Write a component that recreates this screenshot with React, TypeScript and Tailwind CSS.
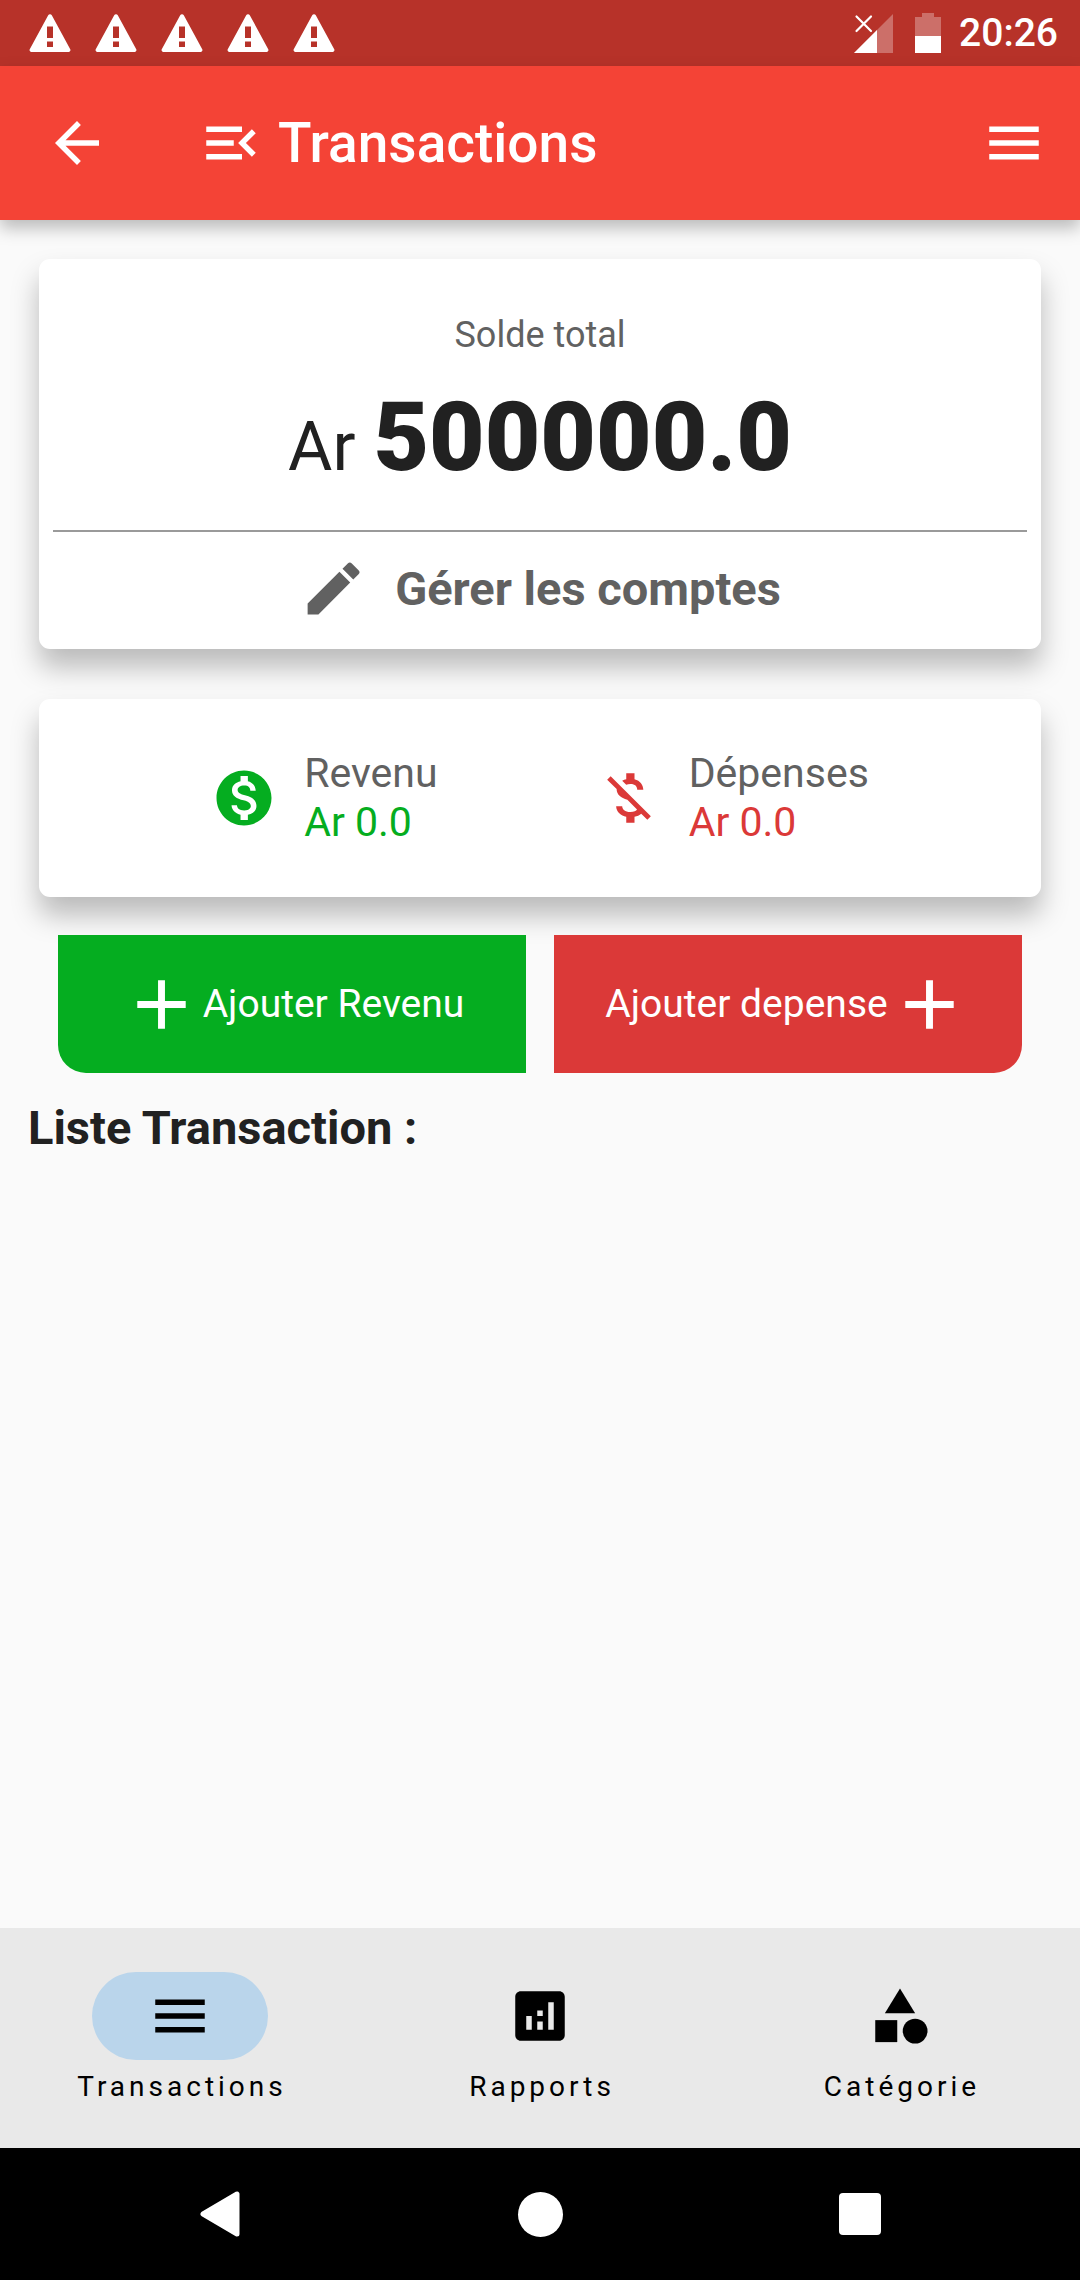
import React from "react";
import {
  MdAdd,
  MdAnalytics,
  MdArrowBack,
  MdCategory,
  MdEdit,
  MdMenu,
  MdMenuOpen,
  MdMoneyOff,
  MdMonetizationOn,
} from "react-icons/md";

function WarningIcon() {
  return (
    <svg viewBox="0 0 42 38" className="h-[38px] w-[42px]" fill="#fff" aria-hidden="true">
      <path
        fillRule="evenodd"
        d="M19.2 1.2a2.1 2.1 0 0 1 3.6 0L41.1 34.9A2 2 0 0 1 39.4 38H2.6A2 2 0 0 1 .9 34.9ZM18 12.5V24h6V12.5ZM18 27.5v5.500h6v-5.500Z"
      />
    </svg>
  );
}

function StatusBar() {
  return (
    <div className="flex h-[66px] items-center justify-between bg-[#b73229] pl-[29px] pr-[22px] text-white">
      <div className="flex gap-6">
        {[0, 1, 2, 3, 4].map((n) => (
          <WarningIcon key={n} />
        ))}
      </div>
      <div className="flex items-center">
        <svg viewBox="0 0 40 40" className="h-10 w-10" aria-hidden="true">
          <path d="M40 1V40H1Z" fill="#fff" fillOpacity="0.3" />
          <path d="M24 17V40H1Z" fill="#fff" />
          <path d="M3.500 3.500 18 18M18 3.500 3.500 18" stroke="#fff" strokeWidth="2.200" strokeLinecap="round" />
        </svg>
        <svg viewBox="0 0 26 40" className="ml-[22px] h-10 w-[26px]" aria-hidden="true">
          <path d="M7 0H19V4H26V23H0V4H7Z" fill="#fff" fillOpacity="0.3" />
          <path d="M0 23H26V40H0Z" fill="#fff" />
        </svg>
        <span className="ml-[18px] text-[39px] leading-[44px] font-medium">20:26</span>
      </div>
    </div>
  );
}

function AppBar() {
  return (
    <header className="relative flex h-[154px] items-center bg-[#f44336] pr-[33px] pl-11 text-white shadow-[0_8px_16px_rgba(0,0,0,0.26)]">
      <button type="button" aria-label="Retour">
        <MdArrowBack className="size-[66px]" />
      </button>
      <MdMenuOpen className="ml-[88px] size-[66px]" />
      <h1 className="ml-[14px] text-[55px] leading-[66px] font-medium">Transactions</h1>
      <button type="button" aria-label="Menu" className="ml-auto">
        <MdMenu className="size-[66px]" />
      </button>
    </header>
  );
}

function BalanceCard() {
  return (
    <section className="mx-[39px] mt-[39px] rounded-[11px] bg-white pt-[54px] pb-1 shadow-[0_18px_28px_rgba(0,0,0,0.26)]">
      <p className="text-center text-[36px] leading-[44px] text-[#616161]">Solde total</p>
      <p className="mt-8 flex items-baseline justify-center gap-[18px] text-[#212121]">
        <span className="text-[68px] leading-none">Ar</span>
        <span className="text-[96px] leading-none font-black">500000.0</span>
      </p>
      <hr className="mx-[14px] mt-[45px] h-[2px] border-0 bg-[#9a9a9a]" />
      <button
        type="button"
        className="flex w-full items-center justify-center gap-[27px] py-[22px] text-[47px] leading-[54px] font-bold text-[#616161]"
      >
        <MdEdit className="size-[69px]" />
        Gérer les comptes
      </button>
    </section>
  );
}

function SummaryCard() {
  return (
    <section className="mx-[39px] mt-[50px] flex justify-evenly rounded-[11px] bg-white px-[14px] py-[50px] text-[41px] leading-[49px] shadow-[0_18px_28px_rgba(0,0,0,0.26)]">
      <div className="flex items-center gap-[27px] text-[#05ad20]">
        <MdMonetizationOn className="size-[66px]" />
        <div>
          <p className="text-[#616161]">Revenu</p>
          <p>Ar 0.0</p>
        </div>
      </div>
      <div className="flex items-center gap-[27px] text-[#db3938]">
        <MdMoneyOff className="size-[66px]" />
        <div>
          <p className="text-[#616161]">Dépenses</p>
          <p>Ar 0.0</p>
        </div>
      </div>
    </section>
  );
}

function Actions() {
  return (
    <div className="mt-[38px] grid grid-cols-2 gap-7 px-[58px] text-[39px] leading-[46px] text-white">
      <button type="button" className="flex h-[138px] items-center justify-center rounded-bl-[28px] bg-[#05ad20]">
        <MdAdd className="size-[83px]" />
        Ajouter Revenu
      </button>
      <button type="button" className="flex h-[138px] items-center justify-center rounded-br-[28px] bg-[#db3938]">
        Ajouter depense
        <MdAdd className="size-[83px]" />
      </button>
    </div>
  );
}

const tabs = [
  { label: "Transactions", Icon: MdMenu, active: true },
  { label: "Rapports", Icon: MdAnalytics, active: false },
  { label: "Catégorie", Icon: MdCategory, active: false },
];

function BottomNav() {
  return (
    <nav className="grid h-[220px] grid-cols-3 bg-[#e9e9e9] text-black">
      {tabs.map(({ label, Icon, active }) => (
        <button
          key={label}
          type="button"
          aria-current={active ? "page" : undefined}
          className="flex flex-col items-center pt-11"
        >
          <span
            className={
              active
                ? "flex h-[88px] w-44 items-center justify-center rounded-full bg-[#bad5eb]"
                : "flex h-[88px] w-44 items-center justify-center"
            }
          >
            <Icon className="size-[66px]" />
          </span>
          <span className="mt-[11px] pl-1 text-[28px] leading-8 tracking-[4px]">{label}</span>
        </button>
      ))}
    </nav>
  );
}

function SystemNav() {
  return (
    <div className="grid h-[132px] grid-cols-3 place-items-center bg-black px-[60px]">
      <button type="button" aria-label="Précédent">
        <svg viewBox="0 0 40 46" className="h-[46px] w-10" aria-hidden="true">
          <path
            d="M3 23 37 3V43Z"
            fill="#fff"
            stroke="#fff"
            strokeWidth="5"
            strokeLinejoin="round"
          />
        </svg>
      </button>
      <button type="button" aria-label="Accueil" className="size-[45px] rounded-full bg-white" />
      <button type="button" aria-label="Applications récentes" className="size-[42px] rounded-[4px] bg-white" />
    </div>
  );
}

export default function App() {
  return (
    <div className="flex min-h-screen flex-col bg-[#fafafa] font-[Roboto,sans-serif]">
      <StatusBar />
      <AppBar />
      <main className="flex-1">
        <BalanceCard />
        <SummaryCard />
        <Actions />
        <h2 className="mt-7 px-7 text-[47px] leading-[54px] font-bold text-[#212121]">Liste Transaction :</h2>
      </main>
      <BottomNav />
      <SystemNav />
    </div>
  );
}
